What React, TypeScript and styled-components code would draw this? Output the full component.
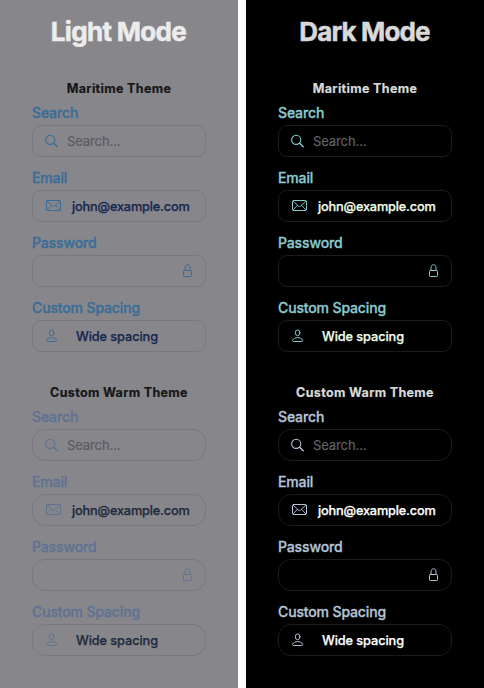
import React from 'react';
import styled, { createGlobalStyle, ThemeProvider } from 'styled-components';

type Palette = {
  accent: string;
  text: string;
  placeholder: string;
  border: string;
  heading: string;
  radius: number;
};

const GlobalStyle = createGlobalStyle`
  *, *::before, *::after { box-sizing: border-box; }
  body {
    margin: 0;
    background: #fff;
    font-family: Inter, "Liberation Sans", sans-serif;
  }
`;

const Page = styled.main`
  display: grid;
  grid-template-columns: repeat(2, minmax(0, 1fr));
  gap: 8px;
  height: 688px;
`;

const Panel = styled.section<{ $bg: string }>`
  display: flex;
  flex-direction: column;
  gap: 32px;
  padding: 16px 32px 32px;
  background: ${({ $bg }) => $bg};
`;

const Title = styled.h1<{ $color: string; $spacing: number }>`
  margin: 0;
  height: 32px;
  padding-right: 1px;
  font-size: 26px;
  font-weight: 700;
  line-height: 32px;
  letter-spacing: ${({ $spacing }) => $spacing}px;
  text-align: center;
  white-space: nowrap;
  -webkit-text-stroke: 0.5px currentColor;
  color: ${({ $color }) => $color};
`;

const ThemeBlock = styled.div`
  display: flex;
  flex-direction: column;
`;

const ThemeName = styled.h2`
  margin: 0 0 7px;
  font-size: 12.5px;
  font-weight: 700;
  line-height: 17px;
  letter-spacing: 0.34px;
  text-align: center;
  white-space: nowrap;
  -webkit-text-stroke: 0.2px currentColor;
  color: ${({ theme }) => (theme as Palette).heading};
`;

const Fields = styled.div`
  display: grid;
  gap: 12px;
`;

const Field = styled.div`
  display: grid;
  gap: 4px;
`;

const Label = styled.span`
  font-size: 14px;
  font-weight: 500;
  line-height: 17px;
  letter-spacing: -0.14px;
  -webkit-text-stroke: 0.3px currentColor;
  color: ${({ theme }) => (theme as Palette).accent};
`;

const InputBox = styled.div<{ $inset: number; $gap: number; $trailing?: boolean }>`
  display: flex;
  align-items: center;
  justify-content: ${({ $trailing }) => ($trailing ? 'flex-end' : 'flex-start')};
  gap: ${({ $gap }) => $gap}px;
  height: 32px;
  padding: 0 ${({ $inset }) => $inset}px;
  border: 1px solid ${({ theme }) => (theme as Palette).border};
  border-radius: ${({ theme }) => (theme as Palette).radius}px;
`;

const Value = styled.span<{ $spacing: number }>`
  padding-top: 2px;
  font-size: 12.75px;
  font-weight: 500;
  line-height: 18px;
  letter-spacing: ${({ $spacing }) => $spacing}px;
  white-space: nowrap;
  -webkit-text-stroke: 0.25px currentColor;
  color: ${({ theme }) => (theme as Palette).text};
`;

const Placeholder = styled.span`
  font-size: 13px;
  line-height: 18px;
  letter-spacing: -0.1px;
  -webkit-text-stroke: 0.15px currentColor;
  color: ${({ theme }) => (theme as Palette).placeholder};
`;

const Icon = styled.svg`
  flex: none;
  display: block;
  fill: none;
  stroke: ${({ theme }) => (theme as Palette).accent};
  stroke-width: 1;
  stroke-linecap: round;
  stroke-linejoin: round;
`;

const SearchIcon = () => (
  <Icon width="13" height="14" viewBox="0 0 13 14">
    <circle cx="5.2" cy="5.8" r="4.6" strokeWidth="1.1" />
    <path d="M8.7 9.3 12.2 12.8" strokeWidth="1.4" />
  </Icon>
);

const MailIcon = () => (
  <Icon width="16" height="12" viewBox="0 0 16 12">
    <rect x="0.5" y="0.5" width="14" height="10" rx="1.2" />
    <path d="M1.1 1.1 6.5 6.1Q7.5 7 8.5 6.1L13.9 1.1M1.1 9.9 5.5 5.3M13.9 9.9 9.5 5.3" strokeWidth="0.9" />
  </Icon>
);

const LockIcon = () => (
  <Icon width="10" height="14" viewBox="0 0 10 14">
    <rect x="0.5" y="6.5" width="8" height="6" rx="0.8" />
    <path d="M2 6.3V3.8C2 1.9 3 0.8 4.5 0.8S7 1.9 7 3.8V6.3" />
  </Icon>
);

const PersonIcon = () => (
  <Icon width="12" height="14" viewBox="0 0 12 14">
    <ellipse cx="5.6" cy="3.8" rx="2.3" ry="2.9" />
    <path d="M1.3 12.5C.6 12.5.3 11.9.6 11.2 1.3 9.7 3.2 8.6 5.6 8.6S9.9 9.7 10.6 11.2C10.9 11.9 10.6 12.5 9.9 12.5Z" />
  </Icon>
);

const InputSet = ({ name, palette }: { name: string; palette: Palette }) => (
  <ThemeProvider theme={palette}>
    <ThemeBlock>
      <ThemeName>{name}</ThemeName>
      <Fields>
        <Field>
          <Label>Search</Label>
          <InputBox $inset={12} $gap={9}>
            <SearchIcon />
            <Placeholder>Search...</Placeholder>
          </InputBox>
        </Field>
        <Field>
          <Label>Email</Label>
          <InputBox $inset={13} $gap={10}>
            <MailIcon />
            <Value $spacing={-0.18}>john@example.com</Value>
          </InputBox>
        </Field>
        <Field>
          <Label>Password</Label>
          <InputBox $inset={12} $gap={0} $trailing>
            <LockIcon />
          </InputBox>
        </Field>
        <Field>
          <Label>Custom Spacing</Label>
          <InputBox $inset={13} $gap={18}>
            <PersonIcon />
            <Value $spacing={-0.09}>Wide spacing</Value>
          </InputBox>
        </Field>
      </Fields>
    </ThemeBlock>
  </ThemeProvider>
);

const light = { placeholder: '#5b5a5d', border: '#79787c', heading: '#171717' };
const dark = { placeholder: '#656565', border: '#1b1b1b', heading: '#d9d9d9' };

const modes = [
  {
    title: 'Light Mode',
    spacing: -0.68,
    bg: '#87868b',
    color: '#ececec',
    maritime: { ...light, accent: '#386d98', text: '#17274f', radius: 9 },
    warm: { ...light, accent: '#5f7293', text: '#202a3c', radius: 13 },
  },
  {
    title: 'Dark Mode',
    spacing: -0.85,
    bg: '#000000',
    color: '#d9d9d9',
    maritime: { ...dark, accent: '#8acbd0', text: '#f0ffe9', radius: 9 },
    warm: { ...dark, accent: '#b6c4d9', text: '#ffffff', radius: 13 },
  },
];

export default function App() {
  return (
    <>
      <GlobalStyle />
      <Page>
        {modes.map((mode) => (
          <Panel key={mode.title} $bg={mode.bg}>
            <Title $color={mode.color} $spacing={mode.spacing}>{mode.title}</Title>
            <InputSet name="Maritime Theme" palette={mode.maritime} />
            <InputSet name="Custom Warm Theme" palette={mode.warm} />
          </Panel>
        ))}
      </Page>
    </>
  );
}
